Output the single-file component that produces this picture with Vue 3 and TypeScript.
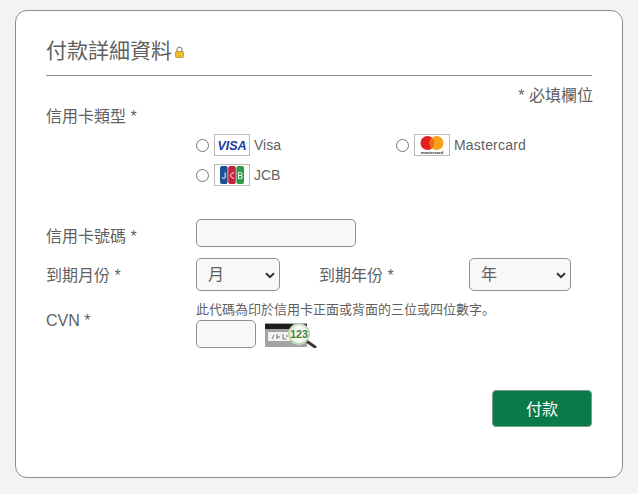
<script setup lang="ts">
import { ref } from 'vue'

const cardType = ref('')
const cardNumber = ref('')
const month = ref('')
const year = ref('')
const cvn = ref('')

const months = Array.from({ length: 12 }, (_, i) => String(i + 1).padStart(2, '0'))
const years = Array.from({ length: 10 }, (_, i) => String(2024 + i))
</script>

<template>
  <main class="page">
    <form class="card" @submit.prevent>
      <h2 class="title">
        付款詳細資料
        <svg class="lock" width="9" height="12" viewBox="0 0 9 12">
          <path d="M2 6V3.6a2.5 2.5 0 0 1 5 0V6" fill="none" stroke="#8d8d8d" stroke-width="1.2" />
          <rect x="0.5" y="5.5" width="8" height="6" rx="1" fill="#efbd2c" stroke="#b58a1c" stroke-width="0.7" />
        </svg>
      </h2>
      <p class="required">* 必填欄位</p>

      <div class="row type-row">
        <label class="label">信用卡類型 *</label>
        <div class="types">
          <label class="type">
            <input v-model="cardType" type="radio" value="visa" />
            <span class="badge">
              <svg width="30" height="14" viewBox="0 0 30 14">
                <text x="15" y="11.5" text-anchor="middle" class="visa-mark">VISA</text>
              </svg>
            </span>
            Visa
          </label>
          <label class="type">
            <input v-model="cardType" type="radio" value="mastercard" />
            <span class="badge">
              <svg width="34" height="20" viewBox="0 0 34 20">
                <circle cx="12.5" cy="8" r="7" fill="#e3201f" />
                <circle cx="21.5" cy="8" r="7" fill="#f7a11b" />
                <path d="M17 2.7a7 7 0 0 1 0 10.6a7 7 0 0 1 0-10.6z" fill="#f06a1c" />
                <text x="17" y="19" text-anchor="middle" class="mc-mark">mastercard</text>
              </svg>
            </span>
            <span class="mc-name">Mastercard</span>
          </label>
          <label class="type">
            <input v-model="cardType" type="radio" value="jcb" />
            <span class="badge">
              <svg width="34" height="20" viewBox="0 0 34 20">
                <rect x="5" y="1" width="7.6" height="18" rx="2" fill="#1d4f91" />
                <rect x="13.2" y="1" width="7.6" height="18" rx="2" fill="#c8213f" />
                <rect x="21.4" y="1" width="7.6" height="18" rx="2" fill="#2f9b48" />
                <path d="M10.2 7.5v4.6a1.4 1.4 0 0 1-2.8 0" fill="none" stroke="#fff" stroke-width="1" />
                <path d="M19 8a2.6 2.6 0 1 0 0 5" fill="none" stroke="#fff" stroke-width="1" />
                <path d="M23.5 7.5v6h2.3a1.5 1.5 0 0 0 0-3h-2.3h2.1a1.5 1.5 0 0 0 0-3z" fill="none" stroke="#fff" stroke-width="0.9" />
              </svg>
            </span>
            JCB
          </label>
        </div>
      </div>

      <div class="row number-row">
        <label class="label" for="number">信用卡號碼 *</label>
        <input id="number" v-model="cardNumber" class="field number" type="text" />
      </div>

      <div class="row expiry-row">
        <label class="label" for="month">到期月份 *</label>
        <div class="expiry">
          <div class="select-wrap month">
            <select id="month" v-model="month" class="field">
              <option value="">月</option>
              <option v-for="m in months" :key="m" :value="m">{{ m }}</option>
            </select>
            <svg class="chevron" width="10" height="7" viewBox="0 0 10 7">
              <path d="M1 1.2l4 4 4-4" fill="none" stroke="#333" stroke-width="2" />
            </svg>
          </div>
          <label class="label year-label" for="year">到期年份 *</label>
          <div class="select-wrap year">
            <select id="year" v-model="year" class="field">
              <option value="">年</option>
              <option v-for="y in years" :key="y" :value="y">{{ y }}</option>
            </select>
            <svg class="chevron" width="10" height="7" viewBox="0 0 10 7">
              <path d="M1 1.2l4 4 4-4" fill="none" stroke="#333" stroke-width="2" />
            </svg>
          </div>
        </div>
      </div>

      <div class="row cvn-row">
        <label class="label cvn-label" for="cvn">CVN *</label>
        <div>
          <p class="hint">此代碼為印於信用卡正面或背面的三位或四位數字<span class="stop">。</span></p>
          <div class="cvn-line">
            <input id="cvn" v-model="cvn" class="field cvn" type="text" />
            <svg width="53" height="28" viewBox="0 0 53 28">
              <rect x="0" y="3" width="42" height="24" fill="#a3a3a3" />
              <rect x="0" y="4" width="42" height="5" fill="#1d1d1d" />
              <rect x="3" y="12" width="22" height="9" fill="#f2f2f2" />
              <path d="M7 19l2-4M12 14v5M12 17h3M18 14v5M21 16h2M18 19h3" stroke="#666" stroke-width="0.9" fill="none" />
              <path d="M40 20l10 7" stroke="#3a3a3a" stroke-width="3" stroke-linecap="round" />
              <circle cx="34" cy="14" r="10" fill="#f4f8f1" stroke="#c3d8b8" stroke-width="2" />
              <text x="34" y="17.5" text-anchor="middle" class="cvn-digits">123</text>
            </svg>
          </div>
        </div>
      </div>

      <div class="actions">
        <button class="pay" type="submit">付款</button>
      </div>
    </form>
  </main>
</template>

<style>
html,
body {
  margin: 0;
  background: #f3f3f3;
}
</style>

<style scoped>
.page {
  box-sizing: border-box;
  width: 638px;
  height: 494px;
  padding: 10px 15px 16px;
  font-family: 'Liberation Sans', 'Noto Sans CJK TC', sans-serif;
  color: #5f5f5f;
  font-size: 16px;
}

.card {
  box-sizing: border-box;
  height: 468px;
  padding: 24px 30px 0;
  background: #fff;
  border: 1px solid #8c8c8c;
  border-radius: 12px;
}

.title {
  margin: 0;
  height: 41px;
  padding-bottom: 9px;
  box-sizing: border-box;
  display: flex;
  align-items: center;
  gap: 3px;
  font-size: 21px;
  font-weight: 400;
  line-height: 32px;
  border-bottom: 1px solid #8c8c8c;
}

.lock {
  margin-top: 3px;
}

.required {
  margin: 10px -1px 0 0;
  text-align: right;
  line-height: 20px;
}

.row {
  display: grid;
  grid-template-columns: 150px 1fr;
}

.label {
  line-height: 24px;
}

.type-row {
  margin-top: -1px;
}

.types {
  display: grid;
  grid-template-columns: 200px 1fr;
  grid-auto-rows: 30px;
  padding-top: 25px;
  font-size: 14px;
}

.type {
  display: flex;
  align-items: center;
}

.type input {
  width: 13px;
  height: 13px;
  margin: 0 5px 0 0;
}

.badge {
  box-sizing: border-box;
  width: 36px;
  height: 22px;
  margin-right: 4px;
  display: flex;
  align-items: center;
  justify-content: center;
  border: 1px solid #bbb;
}

.mc-name {
  letter-spacing: 0.2px;
}

.visa-mark {
  font-family: 'Liberation Sans', sans-serif;
  font-size: 12.5px;
  font-weight: 700;
  font-style: italic;
  fill: #1a3a9c;
}

.mc-mark {
  font-family: 'Liberation Sans', sans-serif;
  font-size: 4.2px;
  font-weight: 700;
  fill: #3a2a2a;
}

.field {
  box-sizing: border-box;
  background: #f8f8f8;
  border: 1px solid #8f8f8f;
  border-radius: 5px;
  font: inherit;
  color: #5f5f5f;
  outline: none;
}

.number-row {
  margin-top: 28px;
  align-items: start;
}

.number-row .label {
  margin-top: 7px;
}

.number {
  width: 160px;
  height: 28px;
  margin-top: 1px;
}

.expiry-row {
  margin-top: 9px;
  align-items: center;
}

.expiry-row .label {
  margin-top: 2px;
}

.expiry {
  display: flex;
  align-items: center;
}

.select-wrap {
  position: relative;
  height: 33px;
}

.select-wrap select {
  appearance: none;
  width: 100%;
  height: 100%;
  padding: 0 11px;
}

.month {
  width: 84px;
}

.year {
  width: 102px;
}

.year-label {
  width: 150px;
  margin-left: 39px;
}

.chevron {
  position: absolute;
  right: 5px;
  top: 14px;
  pointer-events: none;
}

.cvn-row {
  margin-top: 8px;
}

.cvn-label {
  margin-top: 10px;
  line-height: 24px;
}

.hint {
  margin: 0;
  font-size: 13px;
  line-height: 20px;
}

.stop {
  font-family: 'Noto Sans CJK SC', sans-serif;
}

.cvn-line {
  display: flex;
  align-items: center;
  gap: 9px;
}

.cvn {
  width: 60px;
  height: 28px;
}

.cvn-digits {
  font-family: 'Liberation Sans', sans-serif;
  font-size: 10.5px;
  font-weight: 700;
  fill: #3f7f3a;
}

.actions {
  display: flex;
  justify-content: flex-end;
  margin-top: 42px;
}

.pay {
  width: 100px;
  height: 37px;
  padding: 0 0 2px;
  background: #0a7a48;
  border: 1px solid #7d9c8c;
  border-radius: 4px;
  color: #fff;
  font: inherit;
}
</style>
